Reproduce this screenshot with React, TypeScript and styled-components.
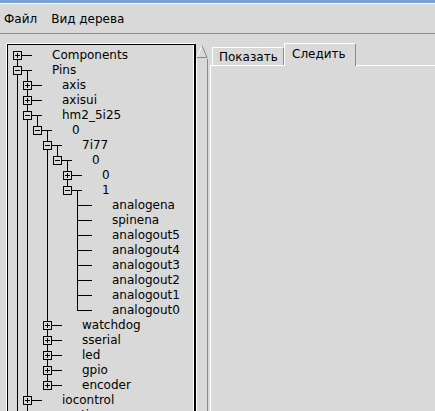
import * as React from "react";
import styled, { createGlobalStyle } from "styled-components";

const GlobalStyle = createGlobalStyle`
  html, body {
    margin: 0;
    padding: 0;
    overflow: hidden;
    background: #d9d9d9;
  }
  body {
    font-family: "DejaVu Sans", "Liberation Sans", sans-serif;
    font-size: 12px;
    color: #000;
  }
`;

const Window = styled.div`
  width: 435px;
  height: 440px;
  display: flex;
  flex-direction: column;
  background: #d9d9d9;
`;

const TitleEdge = styled.div`
  height: 3px;
  background: #79a1d6;
  border-bottom: 1px solid #fff;
`;

const MenuBar = styled.div`
  height: 29px;
  display: flex;
  align-items: center;
  padding-left: 4px;
  border-bottom: 1px solid #8c8c8c;
`;

const MenuItem = styled.span`
  margin-right: 14px;
  white-space: nowrap;
`;

const Body = styled.div`
  flex: 1;
  display: flex;
  padding: 10px 0 0 7px;
  min-height: 0;
`;

const TreeFrame = styled.div`
  box-sizing: border-box;
  width: 189px;
  border-style: solid;
  border-color: #000;
  border-width: 1px 2px 1px 1px;
  box-shadow: -1px -1px 0 #fff, inset -1px 0 0 #fff;
  padding: 3px 0 0 4px;
  overflow: hidden;
`;

const Row = styled.div`
  display: flex;
  height: 15px;
`;

const Guide = styled.span<{ $on: boolean }>`
  flex: none;
  width: 10px;
  height: 15px;
  background: ${({ $on }) =>
    $on ? "linear-gradient(#000, #000) 5px 0 / 1px 100% no-repeat" : "none"};
`;

const Branch = styled.span<{ $top: boolean; $bottom: boolean; $child: boolean }>`
  flex: none;
  width: 20px;
  height: 15px;
  display: flex;
  align-items: center;
  background-image: linear-gradient(#000, #000), linear-gradient(#000, #000),
    linear-gradient(#000, #000), linear-gradient(#000, #000);
  background-repeat: no-repeat;
  background-position: 5px 0, 5px 7px, 5px 7px, 15px 7px;
  background-size: ${({ $top }) => ($top ? "1px 8px" : "0 0")},
    ${({ $bottom }) => ($bottom ? "1px 8px" : "0 0")}, 15px 1px,
    ${({ $child }) => ($child ? "1px 8px" : "0 0")};
`;

const Toggle = styled.span<{ $open: boolean }>`
  box-sizing: border-box;
  width: 9px;
  height: 9px;
  margin-left: 1px;
  border: 1px solid #000;
  background-color: #d9d9d9;
  background-image: linear-gradient(#000, #000), linear-gradient(#000, #000);
  background-repeat: no-repeat;
  background-position: 1px 3px, 3px 1px;
  background-size: 5px 1px, ${({ $open }) => ($open ? "0 0" : "1px 5px")};
`;

const Label = styled.span`
  margin-left: 20px;
  line-height: 15px;
  white-space: nowrap;
`;

const Scrollbar = styled.div`
  flex: none;
  width: 12px;
  display: flex;
  flex-direction: column;
`;

const ArrowButton = styled.div`
  height: 15px;
`;

const Slider = styled.div`
  flex: 1;
  border-left: 1px solid #fff;
  border-right: 1px solid #888;
`;

const Notebook = styled.div`
  flex: 1;
  display: flex;
  flex-direction: column;
  margin: -1px 0 0 2px;
`;

const Tabs = styled.div`
  display: flex;
  align-items: flex-end;
  padding-left: 2px;
  border-bottom: 1px solid #fff;
`;

const Tab = styled.div<{ $active?: boolean }>`
  box-sizing: border-box;
  width: 72px;
  display: flex;
  align-items: center;
  white-space: nowrap;
  background: #d9d9d9;
  border-top: 1px solid #fff;
  border-left: 1px solid #fff;
  border-right: 1px solid #8a8a8a;
  border-top-right-radius: 2px;
  height: ${({ $active }) => ($active ? "23px" : "18px")};
  padding-left: ${({ $active }) => ($active ? "7px" : "6px")};
  margin-bottom: ${({ $active }) => ($active ? "-1px" : "0")};
  padding-bottom: ${({ $active }) => ($active ? "2px" : "0")};
`;

const Pane = styled.div`
  flex: 1;
  border-left: 1px solid #fff;
`;

type Node = { label: string; open?: boolean; shut?: boolean; kids?: Node[] };

const leaf = (label: string): Node => ({ label });
const shut = (label: string): Node => ({ label, shut: true });

const tree: Node[] = [
  shut("Components"),
  {
    label: "Pins",
    open: true,
    kids: [
      shut("axis"),
      shut("axisui"),
      {
        label: "hm2_5i25",
        open: true,
        kids: [
          {
            label: "0",
            open: true,
            kids: [
              {
                label: "7i77",
                open: true,
                kids: [
                  {
                    label: "0",
                    open: true,
                    kids: [
                      shut("0"),
                      {
                        label: "1",
                        open: true,
                        kids: [
                          "analogena",
                          "spinena",
                          "analogout5",
                          "analogout4",
                          "analogout3",
                          "analogout2",
                          "analogout1",
                          "analogout0",
                        ].map(leaf),
                      },
                    ],
                  },
                ],
              },
              shut("watchdog"),
              shut("sserial"),
              shut("led"),
              shut("gpio"),
              shut("encoder"),
            ],
          },
        ],
      },
      shut("iocontrol"),
      shut("motion"),
      shut("halui"),
    ],
  },
  shut("Parameters"),
  shut("Signals"),
];

type Line = {
  key: string;
  label: string;
  guides: boolean[];
  top: boolean;
  bottom: boolean;
  open: boolean;
  toggle: boolean;
};

function flatten(nodes: Node[], guides: boolean[], path: string, out: Line[]) {
  nodes.forEach((n, i) => {
    const hasNext = i < nodes.length - 1;
    const key = `${path}/${i}`;
    const open = !!n.open && !!n.kids?.length;
    out.push({
      key,
      label: n.label,
      guides,
      top: !(guides.length === 0 && i === 0),
      bottom: hasNext,
      open,
      toggle: open || !!n.shut,
    });
    if (open) flatten(n.kids!, [...guides, hasNext], key, out);
  });
  return out;
}

const lines = flatten(tree, [], "", []);

function UpArrow() {
  return (
    <svg width="12" height="15" viewBox="0 0 12 15">
      <polygon points="6,1.5 1,13.5 11,13.5" fill="#d9d9d9" />
      <line x1="6" y1="1.5" x2="1" y2="13.5" stroke="#fff" strokeWidth="1" />
      <line x1="6" y1="1.5" x2="11" y2="13.5" stroke="#888" strokeWidth="1" />
      <line x1="1" y1="13.5" x2="11" y2="13.5" stroke="#888" strokeWidth="1" />
    </svg>
  );
}

export default function App() {
  return (
    <Window>
      <GlobalStyle />
      <TitleEdge />
      <MenuBar>
        <MenuItem>Файл</MenuItem>
        <MenuItem>Вид дерева</MenuItem>
      </MenuBar>
      <Body>
        <TreeFrame>
          {lines.map((l) => (
            <Row key={l.key}>
              {l.guides.map((g, i) => (
                <Guide key={i} $on={g} />
              ))}
              <Branch $top={l.top} $bottom={l.bottom} $child={l.open}>
                {l.toggle && <Toggle $open={l.open} />}
              </Branch>
              <Label>{l.label}</Label>
            </Row>
          ))}
        </TreeFrame>
        <Scrollbar>
          <ArrowButton>
            <UpArrow />
          </ArrowButton>
          <Slider />
        </Scrollbar>
        <Notebook>
          <Tabs>
            <Tab>Показать</Tab>
            <Tab $active>Следить</Tab>
          </Tabs>
          <Pane />
        </Notebook>
      </Body>
    </Window>
  );
}
